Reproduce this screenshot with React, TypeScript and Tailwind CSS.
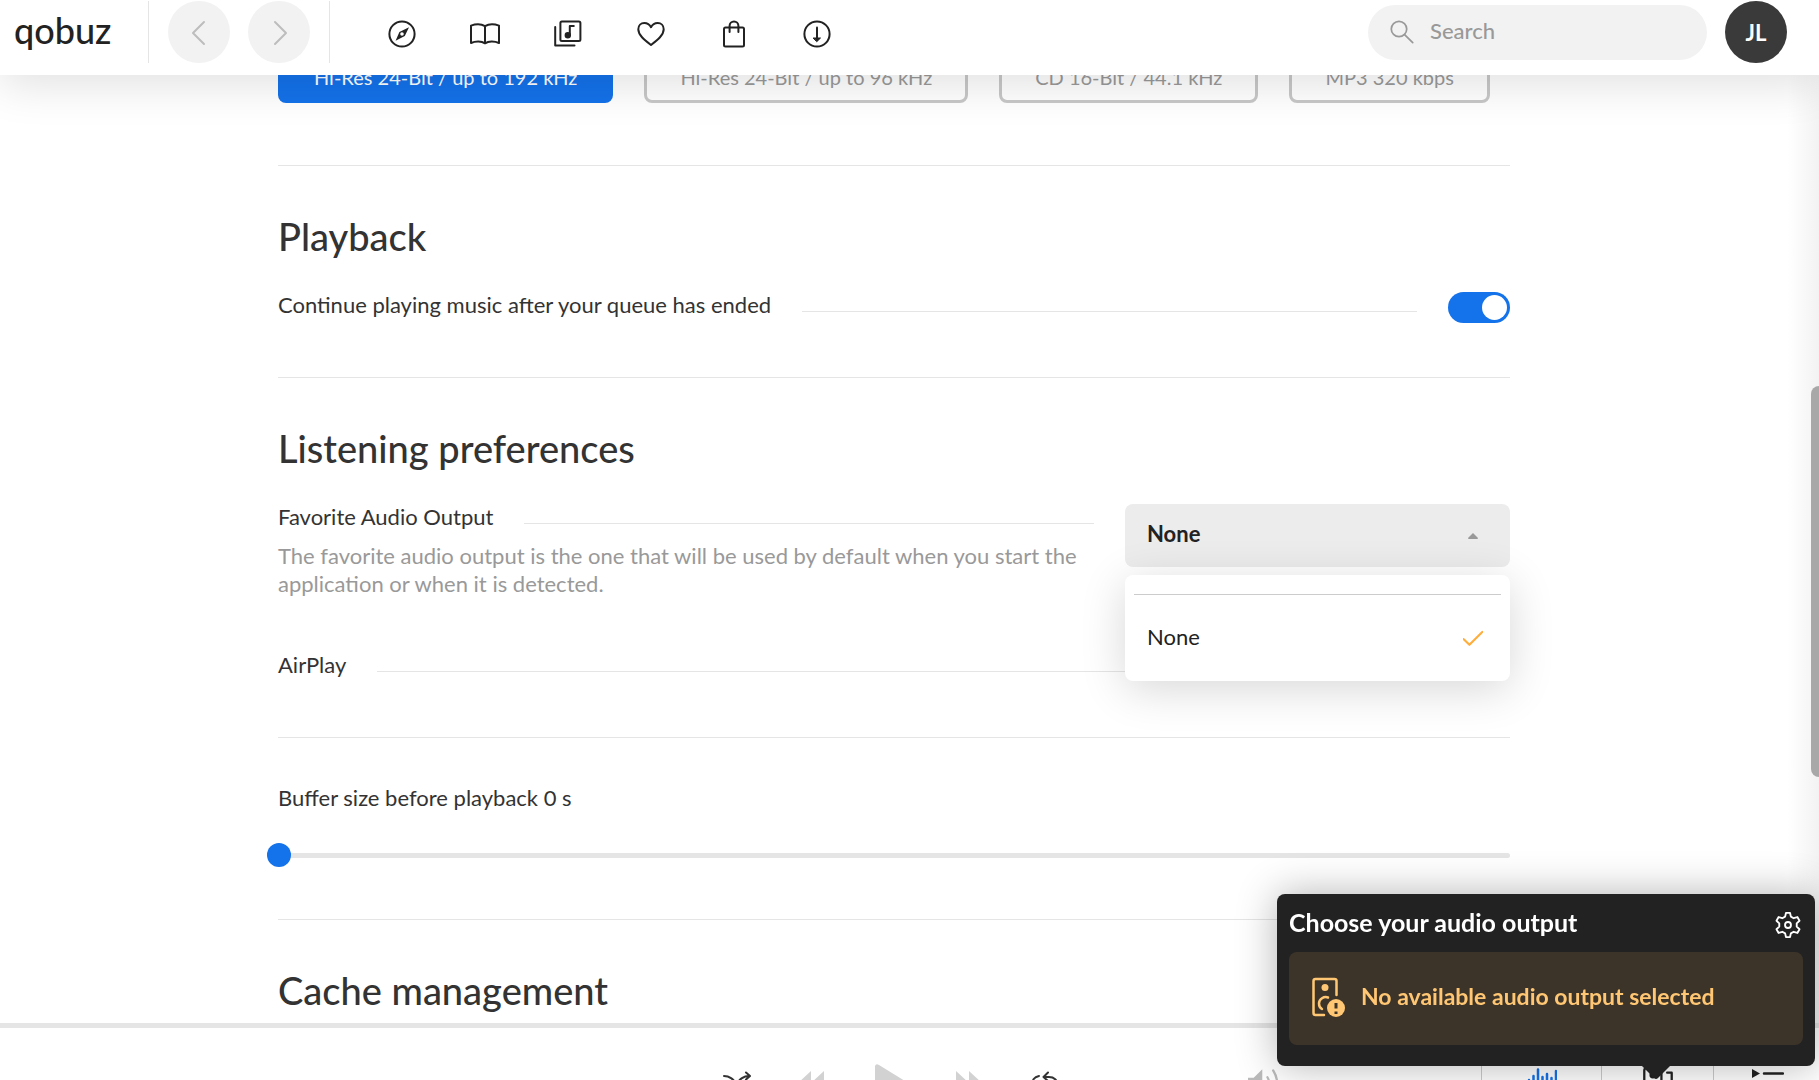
import type { ReactNode } from "react";

interface RowProps {
  id?: string;
  label: string;
  children?: ReactNode;
}

const QUALITIES = [
  { label: "Hi-Res 24-Bit / up to 192 kHz", active: true },
  { label: "Hi-Res 24-Bit / up to 96 kHz", active: false },
  { label: "CD 16-Bit / 44.1 kHz", active: false },
  { label: "MP3 320 kbps", active: false },
];

function Icon({ children, className }: { children: ReactNode; className: string }) {
  return (
    <svg
      aria-hidden="true"
      viewBox="0 0 28 28"
      fill="none"
      stroke="currentColor"
      strokeWidth="2"
      strokeLinecap="round"
      strokeLinejoin="round"
      className={className}
    >
      {children}
    </svg>
  );
}

const NAV = [
  {
    label: "Discover",
    icon: (
      <>
        <circle cx="14" cy="14" r="12.6" />
        <path fill="currentColor" stroke="none" fillRule="evenodd" d="M21 7.2 16.8 16 7.6 20.8 11.4 12zM14 12.2a1.8 1.8 0 1 0 0 3.6 1.8 1.8 0 0 0 0-3.6z" />
      </>
    ),
  },
  {
    label: "Magazine",
    icon: (
      <path d="M14 6.2C10.5 4 4.5 4 0 5.6V23c4.5-2 10.5-2 14 .3 3.500-2.300 9.500-2.300 14-.3V5.600C23.500 4 17.500 4 14 6.200zM14 6.200V23.300" />
    ),
  },
  {
    label: "Library",
    icon: (
      <>
        <rect x="6.4" y="1.6" width="20" height="19.5" rx="1.5" />
        <path d="M1.2 7v18.400h19.300" />
        <path d="M15.800 15.200V6h4" />
        <circle cx="13.8" cy="15.3" r="2.2" fill="currentColor" />
      </>
    ),
  },
  {
    label: "Favorites",
    icon: (
      <path d="M14 25C7 19.500 1.300 15 1.300 9.300 1.300 5.500 4 3 7.300 3 10.300 3 12.700 4.700 14 7.200 15.300 4.700 17.700 3 20.700 3 24 3 26.700 5.500 26.700 9.300 26.700 15 21 19.500 14 25z" />
    ),
  },
  {
    label: "Shop",
    icon: (
      <>
        <rect x="4" y="7.5" width="20" height="19" rx="1.5" />
        <path d="M9.600 12V5.800a4.400 4.400 0 0 1 8.800 0V12" />
      </>
    ),
  },
  {
    label: "Downloads",
    icon: (
      <>
        <circle cx="14" cy="14" r="12.6" />
        <path d="M14 7.500V20" />
        <path fill="currentColor" strokeWidth="1" d="M10.500 18h7L14 21.500z" />
      </>
    ),
  },
];

function Header() {
  return (
    <header className="relative z-20 flex h-[75px] shrink-0 items-center bg-white pr-8 pb-[11px] pl-3 shadow-[0_10px_45px_rgba(0,0,0,0.12)]">
      <a href="#home" className="w-[136px] pb-1 pl-[2px] text-[36px] leading-[48px] font-medium text-[#222]">
        qobuz
      </a>
      <div className="flex h-[62px] items-center gap-[18px] border-x border-[#e5e5e5] px-[19px]">
        <button type="button" aria-label="Back" className="grid size-[62px] place-items-center rounded-full bg-[#f2f2f2] text-[#bdbdbd]">
          <Icon className="size-7">
            <path d="M19 4 8 15l11 11" />
          </Icon>
        </button>
        <button type="button" aria-label="Forward" className="grid size-[62px] place-items-center rounded-full bg-[#f2f2f2] text-[#bdbdbd]">
          <Icon className="size-7">
            <path d="M10 4l11 11-11 11" />
          </Icon>
        </button>
      </div>
      <nav className="ml-[58px] flex gap-[55px] pt-[3px] text-[#222]">
        {NAV.map((item) => (
          <a key={item.label} href="#nav" aria-label={item.label}>
            <Icon className="size-7 overflow-visible">{item.icon}</Icon>
          </a>
        ))}
      </nav>
      <label className="ml-auto flex h-[55px] w-[339px] items-center gap-4 rounded-full bg-[#f2f2f2] px-[22px] text-[#999]">
        <Icon className="size-6 shrink-0">
          <circle cx="10.5" cy="10.5" r="9" />
          <path d="M17 17l9.500 9.500" />
        </Icon>
        <input
          type="search"
          aria-label="Search"
          placeholder="Search"
          className="w-full min-w-0 bg-transparent pb-1 text-[22px] font-medium outline-none placeholder:text-[#999]"
        />
      </label>
      <button type="button" className="ml-[18px] size-[62px] rounded-full bg-[#3a3a3a] text-[22px] font-bold text-white">
        JL
      </button>
    </header>
  );
}

function Row({ id, label, children }: RowProps) {
  return (
    <div className="flex items-start gap-[31px]">
      <label htmlFor={id} className="shrink-0 leading-[25px]">
        {label}
      </label>
      <span className="mt-[19px] h-px flex-1 bg-[#e5e5e5]" />
      {children}
    </div>
  );
}

function Toggle({ id, defaultChecked }: { id: string; defaultChecked?: boolean }) {
  return (
    <input
      id={id}
      type="checkbox"
      role="switch"
      defaultChecked={defaultChecked}
      className="flex h-[31px] w-[62px] shrink-0 appearance-none items-center rounded-full bg-[#ccc] px-[3px] before:size-[25px] before:rounded-full before:bg-white checked:justify-end checked:bg-[#1472ea]"
    />
  );
}

function Heading({ children }: { children: ReactNode }) {
  return <h2 className="mb-9 text-[38px] leading-10 font-medium">{children}</h2>;
}

function OutputSelect() {
  return (
    <div className="relative w-[385px] shrink-0 text-[#222]">
      <select
        id="output"
        defaultValue="none"
        className="block h-[63px] w-full appearance-none rounded-lg bg-[#ececec] px-[22px] pb-1 font-bold"
      >
        <option value="none">None</option>
      </select>
      <svg aria-hidden="true" viewBox="0 0 10 6" className="absolute top-[29px] right-8 h-[6px] w-[10px] fill-[#999]">
        <path d="M5 0 10 5q0 1-1 1H1Q0 6 0 5z" />
      </svg>
      <ul
        role="listbox"
        aria-label="Favorite Audio Output"
        className="absolute top-[71px] z-10 h-[106px] w-full rounded-lg bg-white px-[9px] pt-[19px] shadow-[0_8px_45px_rgba(0,0,0,0.16)]"
      >
        <li
          role="option"
          aria-selected="true"
          className="flex h-[84px] items-center justify-between border-t border-[#ccc] pr-[18px] pl-[13px]"
        >
          None
          <Icon className="size-5 text-[#ffad3b]">
            <path strokeWidth="3" d="M1 17l8 8L27 7" />
          </Icon>
        </li>
      </ul>
    </div>
  );
}

function Settings() {
  return (
    <main className="relative min-h-0 flex-1 overflow-hidden pr-[31px]">
      <div className="mx-auto -mt-6 w-full max-w-[1232px]">
        <div className="mb-[62px] flex gap-[31px] text-[20px]">
          {QUALITIES.map((quality) => (
            <button
              key={quality.label}
              type="button"
              className={
                quality.active
                  ? "h-[52px] rounded-lg bg-[#1472ea] px-9 text-white"
                  : "h-[52px] rounded-lg border-3 border-[#c8c8c8] px-[33px] text-[#999]"
              }
            >
              {quality.label}
            </button>
          ))}
        </div>

        <section className="border-t border-[#e5e5e5] pt-[50px] pb-[54px]">
          <Heading>Playback</Heading>
          <Row id="autoplay" label="Continue playing music after your queue has ended">
            <Toggle id="autoplay" defaultChecked />
          </Row>
        </section>

        <section className="border-t border-[#e5e5e5] pt-[50px] pb-[60px]">
          <Heading>Listening preferences</Heading>
          <div className="mb-[54px] flex gap-[31px]">
            <div className="flex-1">
              <Row id="output" label="Favorite Audio Output" />
              <p className="mt-[13px] leading-7 text-[#999]">
                The favorite audio output is the one that will be used by default when you start the application or when it is
                detected.
              </p>
            </div>
            <OutputSelect />
          </div>
          <Row label="AirPlay" />
        </section>

        <section className="border-t border-[#e5e5e5] pt-[47px] pb-[52px]">
          <label htmlFor="buffer" className="block leading-[25px]">
            Buffer size before playback 0 s
          </label>
          <input
            id="buffer"
            type="range"
            min="0"
            max="10"
            defaultValue="0"
            className="mt-[33px] -ml-[11px] block h-6 w-[calc(100%+11px)] appearance-none bg-transparent [&::-webkit-slider-runnable-track]:h-[5px] [&::-webkit-slider-runnable-track]:rounded-full [&::-webkit-slider-runnable-track]:bg-[#e5e5e5] [&::-webkit-slider-thumb]:-mt-[10px] [&::-webkit-slider-thumb]:size-6 [&::-webkit-slider-thumb]:appearance-none [&::-webkit-slider-thumb]:rounded-full [&::-webkit-slider-thumb]:bg-[#1472ea]"
          />
        </section>

        <section className="border-t border-[#e5e5e5] pt-[50px]">
          <Heading>Cache management</Heading>
        </section>
      </div>
      <div className="absolute inset-y-0 right-0 w-8 bg-linear-to-l from-black/5 to-transparent" />
      <div className="absolute top-[311px] right-0 h-[391px] w-2 rounded-l-full bg-[#a8a8a8]" />
    </main>
  );
}

function Player() {
  return (
    <footer className="h-[57px] shrink-0 overflow-hidden border-t-5 border-[#e5e5e5]">
      <div className="flex h-[110px] items-center">
        <div className="flex-1" />
        <div className="flex items-center gap-12 text-[#333]">
          <button type="button" aria-label="Shuffle">
            <Icon className="size-7">
              <path d="M1 7c12 0 12 14 25 14M1 21C14 21 14 7 26 7M23 3.500 27 7l-4 3.500" />
            </Icon>
          </button>
          <button type="button" aria-label="Previous" className="text-[#d2d2d2]">
            <svg aria-hidden="true" viewBox="0 0 28 28" fill="currentColor" className="size-7">
              <path d="M12 2v24L-1 14zM25 2v24L12 14z" />
            </svg>
          </button>
          <button type="button" aria-label="Play" className="text-[#d2d2d2]">
            <svg aria-hidden="true" viewBox="0 0 32 38" fill="currentColor" className="h-[38px] w-8">
              <path d="M0 2Q1-1 4 1l26 16q2 2 0 4L4 37q-3 2-4-1z" />
            </svg>
          </button>
          <button type="button" aria-label="Next" className="text-[#d2d2d2]">
            <svg aria-hidden="true" viewBox="0 0 28 28" fill="currentColor" className="size-7">
              <path d="M1 2v24l13-12zM14 2v24l13-12z" />
            </svg>
          </button>
          <button type="button" aria-label="Repeat">
            <Icon className="size-7 overflow-visible">
              <path d="M8 7C-2 9 0 22 10 22h8c11 0 11-14 0-14h-5M17 3.500 12.500 8l4.500 4" />
            </Icon>
          </button>
        </div>
        <div className="flex flex-1 items-center justify-end pl-[38px]">
          <button type="button" aria-label="Volume" className="mr-[201px] text-[#bbb]">
            <Icon className="size-8">
              <path fill="currentColor" stroke="none" d="M0 9.500h5L12.500 2v24L5 18.500H0z" />
              <path d="M17 9q3 5 0 10M22 3q7 11 0 22" />
            </Icon>
          </button>
          <button type="button" aria-label="Audio quality" className="grid h-[62px] w-[120px] place-items-center border-l border-[#ccc] text-[#1472ea]">
            <svg aria-hidden="true" viewBox="0 0 30 30" stroke="currentColor" strokeWidth="2.5" strokeLinecap="round" className="size-[30px]">
              <path d="M2 12v6M6.500 8v14M11 1.500v27M15.500 9v12M20 6v18M24.500 10v10M29 3v24" />
            </svg>
          </button>
          <button type="button" aria-label="Audio output" className="grid h-[62px] w-[112px] place-items-center border-l border-[#ccc] text-[#222]">
            <Icon className="size-8">
              <rect x="2" y="1" width="15" height="26" rx="2" />
              <circle cx="9.5" cy="7" r="2" fill="currentColor" />
              <circle cx="9.5" cy="18" r="4" />
              <path d="M22 5h4v22h-5" />
            </Icon>
          </button>
          <button type="button" aria-label="Play queue" className="grid h-[62px] w-[106px] place-items-center border-l border-[#ccc] text-[#222]">
            <svg aria-hidden="true" viewBox="0 0 34 28" stroke="currentColor" strokeWidth="2.5" strokeLinecap="round" className="h-7 w-[34px]">
              <path fill="currentColor" stroke="none" d="M2 0l8 4.500L2 9z" />
              <path d="M14 4.500h19M2 14h31M2 23h31" />
            </svg>
          </button>
        </div>
      </div>
    </footer>
  );
}

function OutputPopup() {
  return (
    <aside className="fixed right-1 bottom-[14px] z-30 w-[538px] rounded-lg bg-[#222] px-3 pb-[21px] font-bold shadow-[0_0_40px_rgba(0,0,0,0.3)]">
      <div className="flex h-[58px] items-center justify-between text-white">
        <h3 className="text-[25px]">Choose your audio output</h3>
        <button type="button" aria-label="Audio settings" className="mr-[2px]">
          <Icon className="mt-1 size-[26px] overflow-visible">
            <circle cx="14" cy="14" r="3.2" />
            <path d="M11.800 1h4.400l.9 4 3 1.700 4-1.300 2.300 4-3 2.800v3.600l3 2.800-2.300 4-4-1.300-3 1.700-.9 4h-4.400l-.9-4-3-1.700-4 1.300-2.300-4 3-2.800v-3.600l-3-2.800 2.300-4 4 1.300 3-1.700z" />
          </Icon>
        </button>
      </div>
      <div className="flex h-[93px] items-center gap-4 rounded-lg bg-[#3d3429] pb-1 pl-[22px] text-[23px] text-[#ffc773]">
        <svg aria-hidden="true" viewBox="0 0 34 40" fill="none" stroke="currentColor" strokeWidth="2.5" className="h-10 w-[34px]">
          <path d="M25.500 18V4q0-2-2-2h-19q-2 0-2 2v32q0 2 2 2H13" strokeLinecap="round" />
          <circle cx="14" cy="10.5" r="3.5" fill="currentColor" stroke="none" />
          <path d="M17 20.500c-4-1.500-9 1.500-9 6 0 2.500 1 4.500 3 5.500" strokeLinecap="round" />
          <circle cx="25" cy="31" r="9" fill="currentColor" stroke="none" />
          <path d="M25 26v5.500M25 34.500V37" stroke="#3d3429" strokeWidth="3" />
        </svg>
        No available audio output selected
      </div>
      <svg aria-hidden="true" viewBox="0 0 28 14" className="absolute top-full right-[145px] h-[14px] w-7 fill-[#222]">
        <path d="M0 0h28L16 12q-2 2-4 0z" />
      </svg>
    </aside>
  );
}

export default function App() {
  return (
    <div className="flex h-screen flex-col overflow-hidden bg-white font-['Lato',sans-serif] text-[22px] text-[#333]">
      <Header />
      <Settings />
      <Player />
      <OutputPopup />
    </div>
  );
}
